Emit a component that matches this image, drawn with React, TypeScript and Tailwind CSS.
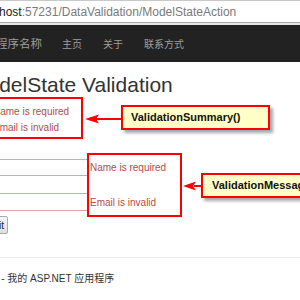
import React from "react";

export default function App() {
  return (
    <div className="relative w-[300px] h-[300px] overflow-hidden bg-white font-['Liberation_Sans','Noto_Sans_CJK_SC',sans-serif]">
      {/* address bar */}
      <div className="h-[23px] border-t border-t-[#c9c9c9] border-b border-b-[#a9a9a9] flex items-center text-[12px] whitespace-nowrap">
        <span className="-ml-[1px] text-[#222]">host</span>
        <span className="text-[#7a7a7a]">:57231/DataValidation/ModelStateAction</span>
      </div>
      <div className="h-[2px] bg-[#e6e6e6]" />
      {/* navbar */}
      <div className="h-[37px] bg-[#222222] flex items-center whitespace-nowrap text-[#9d9d9d]">
        <span className="-ml-[27px] text-[11.5px] font-['Noto_Sans_CJK_SC',sans-serif]">应用程序名称</span>
        <span className="ml-[20px] text-[10px] font-['Noto_Sans_CJK_SC',sans-serif]">主页</span>
        <span className="ml-[21px] text-[10px] font-['Noto_Sans_CJK_SC',sans-serif]">关于</span>
        <span className="ml-[21px] text-[10px] font-['Noto_Sans_CJK_SC',sans-serif]">联系方式</span>
      </div>
      {/* heading */}
      <h2 className="mt-[11px] -ml-[30px] text-[21px] leading-[23px] text-[#333] whitespace-nowrap">
        ModelState Validation
      </h2>
      {/* validation summary */}
      <ul className="mt-[8px] -ml-[7px] text-[10px] leading-[16px] text-[#b94a48] whitespace-nowrap">
        <li>Name is required</li>
        <li>Email is invalid</li>
      </ul>
      {/* form rows */}
      <div className="mt-[23px] flex items-center h-[17px]">
        <div className="w-[88px] flex justify-end">
          <input className="shrink-0 w-[200px] h-[17px] border border-[#dba5a5] bg-white" readOnly />
        </div>
        <span className="ml-[2px] text-[10px] text-[#b94a48] whitespace-nowrap">Name is required</span>
      </div>
      <div className="mt-[17px] flex items-center h-[18px]">
        <div className="w-[88px] flex justify-end">
          <input className="shrink-0 w-[200px] h-[18px] border border-[#dba5a5] bg-white" readOnly />
        </div>
        <span className="ml-[2px] text-[10px] text-[#b94a48] whitespace-nowrap">Email is invalid</span>
      </div>
      <div className="mt-[5px] w-[8px] flex justify-end">
        <button className="shrink-0 h-[18px] pl-[4px] pr-[3px] text-[10px] text-[#222] border border-[#a9a9a9] rounded-[2px] bg-gradient-to-b from-[#f6f6f6] to-[#dedede] whitespace-nowrap">
          Submit
        </button>
      </div>
      {/* footer */}
      <div className="mt-[23px] border-t border-[#eeeeee]" />
      <div className="mt-[14px] -ml-[34px] text-[10px] leading-[14px] text-[#333] whitespace-nowrap">
        © 2014 - 我的 ASP.NET 应用程序
      </div>

      {/* annotations */}
      <div className="absolute left-[-10px] top-[97px] w-[93px] h-[42px] border-2 border-[#ff0000]" />
      <div className="absolute left-[87px] top-[153px] w-[95px] h-[64px] border-2 border-[#ff0000]" />
      <div className="absolute left-[121px] top-[105px] w-[149px] h-[25px] border-2 border-[#ff0000] bg-[#ffffc8] shadow-[3px_3px_3px_rgba(0,0,0,0.35)] flex items-center pl-[8px] text-[11px] font-bold text-[#111] whitespace-nowrap">
        ValidationSummary()
      </div>
      <div className="absolute left-[201px] top-[173px] w-[130px] h-[25px] border-2 border-[#ff0000] bg-[#ffffc8] shadow-[3px_3px_3px_rgba(0,0,0,0.35)] flex items-center pl-[9px] text-[11px] font-bold text-[#111] whitespace-nowrap">
        ValidationMessage()
      </div>
      <svg className="absolute left-0 top-0 pointer-events-none" width="300" height="300" viewBox="0 0 300 300">
        <line x1="96" y1="119" x2="121" y2="119" stroke="#ff0000" strokeWidth="2" />
        <polygon points="85,119 99,114.5 96,119 99,123.5" fill="#ff0000" />
        <line x1="194" y1="186" x2="201" y2="186" stroke="#ff0000" strokeWidth="2" />
        <polygon points="183,186 196,181.5 193,186 196,190.5" fill="#ff0000" />
      </svg>
    </div>
  );
}
